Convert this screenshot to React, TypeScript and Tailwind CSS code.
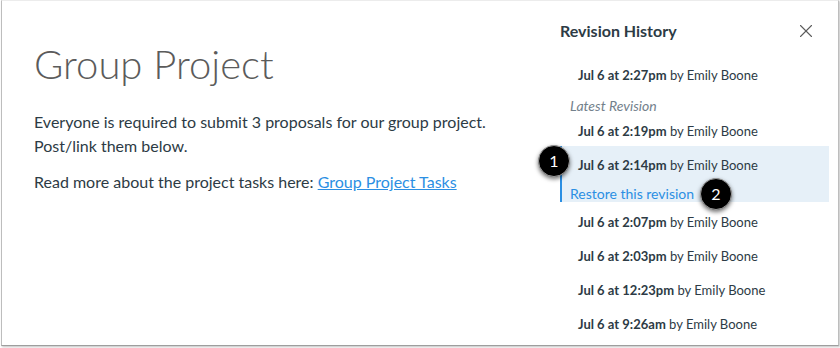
import { X } from 'lucide-react';

const revisions = [
  { date: 'Jul 6 at 2:07pm' },
  { date: 'Jul 6 at 2:03pm' },
  { date: 'Jul 6 at 12:23pm' },
  { date: 'Jul 6 at 9:26am' },
];

function Revision({ date }: { date: string }) {
  return (
    <p className="text-[13px] text-[#2d3b45]">
      <span className="font-bold">{date}</span> by Emily Boone
    </p>
  );
}

function Badge({ n, className }: { n: number; className: string }) {
  return (
    <div
      className={`absolute w-[32px] h-[32px] rounded-full bg-black border border-[#9a9a9a] text-white text-[16px] flex items-center justify-center shadow-[0_2px_4px_rgba(0,0,0,0.55)] ${className}`}
    >
      {n}
    </div>
  );
}

export default function App() {
  return (
    <div className="w-[840px] h-[348px] bg-white font-['Lato','Noto_Sans',sans-serif]">
      <div className="relative w-[838px] h-[346px] ml-px border-l border-r border-b border-t border-l-[#bdbdbd] border-r-[#bdbdbd] border-b-[#9e9e9e] border-t-[#ececec] shadow-[1px_1px_2px_rgba(0,0,0,0.25)] flex">
        <div className="flex-1 pl-[32px] pt-[39px]">
          <h1 className="text-[40px] leading-[48px] font-light text-[#5b5b5b]">Group Project</h1>
          <p className="mt-[22px] text-[16px] leading-[24px] text-[#2d3b45]">
            Everyone is required to submit 3 proposals for our group project.
            <br />
            Post/link them below.
          </p>
          <p className="mt-[12px] text-[16px] leading-[24px] text-[#2d3b45]">
            Read more about the project tasks here:{' '}
            <span className="text-[#2b8fe3] underline">Group Project Tasks</span>
          </p>
        </div>

        <div className="w-[269px] mr-[9px] pt-[18px]">
          <div className="flex items-center justify-between h-[24px]">
            <h2 className="text-[16px] font-bold text-[#2d3b45]">Revision History</h2>
            <X className="w-[22px] h-[22px] text-[#5b5b5b] mr-[12px]" strokeWidth={1.2} />
          </div>

          <div className="mt-[16px] flex flex-col">
            <div className="h-[34px] flex items-center pl-[18px]">
              <Revision date="Jul 6 at 2:27pm" />
            </div>
            <div className="h-[24px] flex items-center pl-[10px]">
              <p className="text-[14px] italic text-[#73818c]">Latest Revision</p>
            </div>
            <div className="h-[29px] flex items-center pl-[18px]">
              <Revision date="Jul 6 at 2:19pm" />
            </div>
            <div className="h-[56px] bg-[#e6f0f8] border-l-2 border-[#2b8fe3] pl-[16px] pt-[10px]">
              <Revision date="Jul 6 at 2:14pm" />
              <p className="mt-[7px] -ml-[8px] text-[14px] text-[#2b8fe3]">Restore this revision</p>
            </div>
            <div className="mt-[4px] flex flex-col">
              {revisions.map((r) => (
                <div key={r.date} className="h-[34px] flex items-center pl-[18px]">
                  <Revision date={r.date} />
                </div>
              ))}
            </div>
          </div>
        </div>

        <Badge n={1} className="left-[536px] top-[144px]" />
        <Badge n={2} className="left-[698px] top-[177px]" />
      </div>
    </div>
  );
}
